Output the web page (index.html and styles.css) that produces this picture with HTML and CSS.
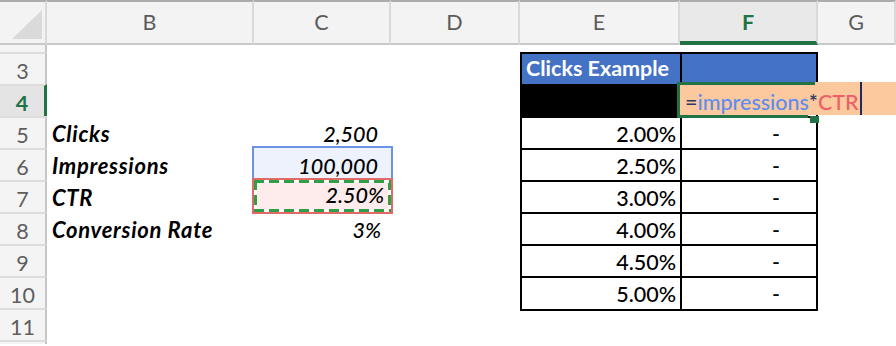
FILE: index.html
```html
<!DOCTYPE html>
<html lang="en">
<head>
    <meta charset="UTF-8">
    <meta name="viewport" content="width=device-width, initial-scale=1.0">
    <title>Clicks Example</title>
    <link rel="stylesheet" href="styles.css">
</head>
<body>
    <div class="sheet">
        <div class="row head-row">
            <div class="corner">
                <svg width="45" height="41" viewBox="0 0 45 41">
                    <polygon points="12,37 42,37 42,8" fill="#dadada"></polygon>
                </svg>
            </div>
            <div class="ch">B</div>
            <div class="ch">C</div>
            <div class="ch">D</div>
            <div class="ch">E</div>
            <div class="ch active">F</div>
            <div class="ch">G</div>
        </div>

        <div class="row short">
            <div class="rh no-line"></div>
        </div>

        <div class="row">
            <div class="rh">3</div>
            <div class="c"></div>
            <div class="c"></div>
            <div class="c"></div>
            <div class="t title">Clicks Example</div>
            <div class="t t-right title"></div>
            <div class="c"></div>
        </div>

        <div class="row">
            <div class="rh active">4</div>
            <div class="c"></div>
            <div class="c"></div>
            <div class="c"></div>
            <div class="t dark"></div>
            <div class="t t-right editing">
                <div class="editor">
                    <span class="formula"><span class="f-op">=</span><span class="f-ref1">impressions</span><span class="f-op">*</span><span class="f-ref2">CTR</span></span>
                    <span class="caret"></span>
                </div>
                <div class="sel"></div>
            </div>
            <div class="c"></div>
        </div>

        <div class="row">
            <div class="rh">5</div>
            <div class="c lbl">Clicks</div>
            <div class="c num it pad-n">2,500</div>
            <div class="c"></div>
            <div class="t num">2.00%</div>
            <div class="t t-right num dash">-</div>
            <div class="c"></div>
        </div>

        <div class="row">
            <div class="rh">6</div>
            <div class="c lbl">Impressions</div>
            <div class="c">
                <div class="ref-blue num it pad-n">100,000</div>
            </div>
            <div class="c"></div>
            <div class="t num">2.50%</div>
            <div class="t t-right num dash">-</div>
            <div class="c"></div>
        </div>

        <div class="row">
            <div class="rh">7</div>
            <div class="c lbl">CTR</div>
            <div class="c">
                <div class="ref-red">
                    <div class="ants num it">2.50%</div>
                </div>
            </div>
            <div class="c"></div>
            <div class="t num">3.00%</div>
            <div class="t t-right num dash">-</div>
            <div class="c"></div>
        </div>

        <div class="row">
            <div class="rh">8</div>
            <div class="c lbl">Conversion Rate</div>
            <div class="c num it pad-p">3%</div>
            <div class="c"></div>
            <div class="t num">4.00%</div>
            <div class="t t-right num dash">-</div>
            <div class="c"></div>
        </div>

        <div class="row">
            <div class="rh">9</div>
            <div class="c"></div>
            <div class="c"></div>
            <div class="c"></div>
            <div class="t num">4.50%</div>
            <div class="t t-right num dash">-</div>
            <div class="c"></div>
        </div>

        <div class="row">
            <div class="rh">10</div>
            <div class="c"></div>
            <div class="c"></div>
            <div class="c"></div>
            <div class="t num t-bottom">5.00%</div>
            <div class="t t-right num dash t-bottom">-</div>
            <div class="c"></div>
        </div>

        <div class="row">
            <div class="rh">11</div>
        </div>

        <div class="row short">
            <div class="rh"></div>
        </div>
    </div>
</body>
</html>
```

FILE: styles.css
```css
html, body {
    margin: 0;
    overflow: hidden;
}
body {
    font-family: Lato, "Open Sans", sans-serif;
    font-size: 21.5px;
    font-weight: 500;
    line-height: 1.2;
    color: #000;
    background-color: #fff;
}
.sheet {
    width: 896px;
}
.row {
    display: grid;
    grid-template-columns: 47px 207px 137px 129px 160px 138px 1fr;
    height: 32px;
}
.row > div {
    box-sizing: border-box;
    white-space: nowrap;
    min-width: 0;
}

/* column letters */
.head-row {
    height: 45px;
}
.corner,
.ch {
    border-top: 2px solid #acacac;
    border-bottom: 2px solid #c8c8c8;
    border-right: 2px solid #d9d9d9;
    background-color: #f3f3f3;
}
.corner svg {
    display: block;
}
.ch {
    text-align: center;
    color: #5b5b5b;
    font-weight: 400;
    padding-top: 8px;
}
.ch.active {
    background-color: #e9e9e9;
    border-bottom: 4px solid #217346;
    color: #217346;
    font-weight: bold;
}

/* row numbers */
.short {
    height: 7px;
}
.short:last-child {
    height: 4px;
}
.rh {
    background-color: #f4f4f4;
    border-top: 2px solid #dddddd;
    border-right: 2px solid #c6c6c6;
    text-align: center;
    color: #5e5e5e;
    font-weight: 400;
    padding-top: 5px;
}
.rh.no-line {
    border-top: none;
}
.rh.active {
    background-color: #e4e4e4;
    border-right: 3px solid #217346;
    color: #217346;
    font-weight: bold;
}

/* plain cells */
.c {
    padding-top: 6px;
}
.lbl {
    font-size: 22px;
    font-weight: bold;
    font-style: italic;
    letter-spacing: 0.7px;
    padding-left: 5px;
    padding-top: 5px;
}
.num {
    text-align: right;
}
.it {
    font-style: italic;
}
.pad-n {
    padding-right: 13px;
}
.pad-p {
    padding-right: 10px;
}

/* range references shown while editing */
.row .c:has(.ref-blue),
.row .c:has(.ref-red) {
    padding-top: 0;
}
.ref-blue {
    margin: -2px;
    height: 36px;
    box-sizing: border-box;
    border: 2px solid #6a93e6;
    background-color: #edf2fd;
    padding-top: 6px;
}
.ref-red {
    position: relative;
    margin: -2px;
    height: 36px;
    box-sizing: border-box;
    border: 2px solid #e36868;
}
.ants {
    height: 100%;
    box-sizing: border-box;
    padding: 3px 7px 0 0;
    background:
        repeating-linear-gradient(90deg, #2f9e45 0 10px, #fff 10px 15px) top left / 100% 3px no-repeat,
        repeating-linear-gradient(90deg, #2f9e45 0 10px, #fff 10px 15px) bottom left / 100% 3px no-repeat,
        repeating-linear-gradient(180deg, #2f9e45 0 10px, #fff 10px 15px) top left / 3px 100% no-repeat,
        repeating-linear-gradient(180deg, #2f9e45 0 10px, #fff 10px 15px) top right / 3px 100% no-repeat,
        #fdeceb;
}

/* bordered table */
.t {
    border-top: 2px solid #000;
    border-left: 2px solid #000;
    padding-top: 4px;
}
.t-right {
    border-right: 2px solid #000;
}
.t-bottom {
    box-shadow: 0 2px 0 #000;
}
.t.num {
    padding-right: 4px;
}
.t.dash {
    padding-right: 36px;
}
.title {
    background-color: #4472c4;
    color: #fff;
    font-weight: bold;
    padding-left: 4px;
    padding-top: 2px;
}
.dark {
    background-color: #000;
}

/* F4 in edit mode */
.editing {
    position: relative;
}
.editor {
    position: absolute;
    left: -2px;
    top: -4px;
    width: 216px;
    height: 33px;
    background-color: #fbc99d;
    display: flex;
    align-items: flex-start;
    padding-left: 5px;
    box-sizing: border-box;
}
.formula {
    padding-top: 8px;
}
.f-op {
    color: #2e3766;
}
.f-ref1 {
    color: #5b8ef0;
}
.f-ref2 {
    color: #ee5f68;
}
.caret {
    align-self: stretch;
    width: 2px;
    margin-left: 1px;
    background-color: #1f2c5a;
}
.sel {
    position: absolute;
    left: -5px;
    top: -4px;
    width: 138px;
    height: 36px;
    box-sizing: border-box;
    border-top: 3px solid #217346;
    border-left: 3px solid #217346;
}
.sel::after {
    content: "";
    position: absolute;
    left: -3px;
    bottom: 0;
    width: 131px;
    height: 3px;
    background-color: #217346;
}
.sel::before {
    content: "";
    position: absolute;
    left: 130px;
    top: 31px;
    width: 9px;
    height: 7px;
    background-color: #217346;
}
```
